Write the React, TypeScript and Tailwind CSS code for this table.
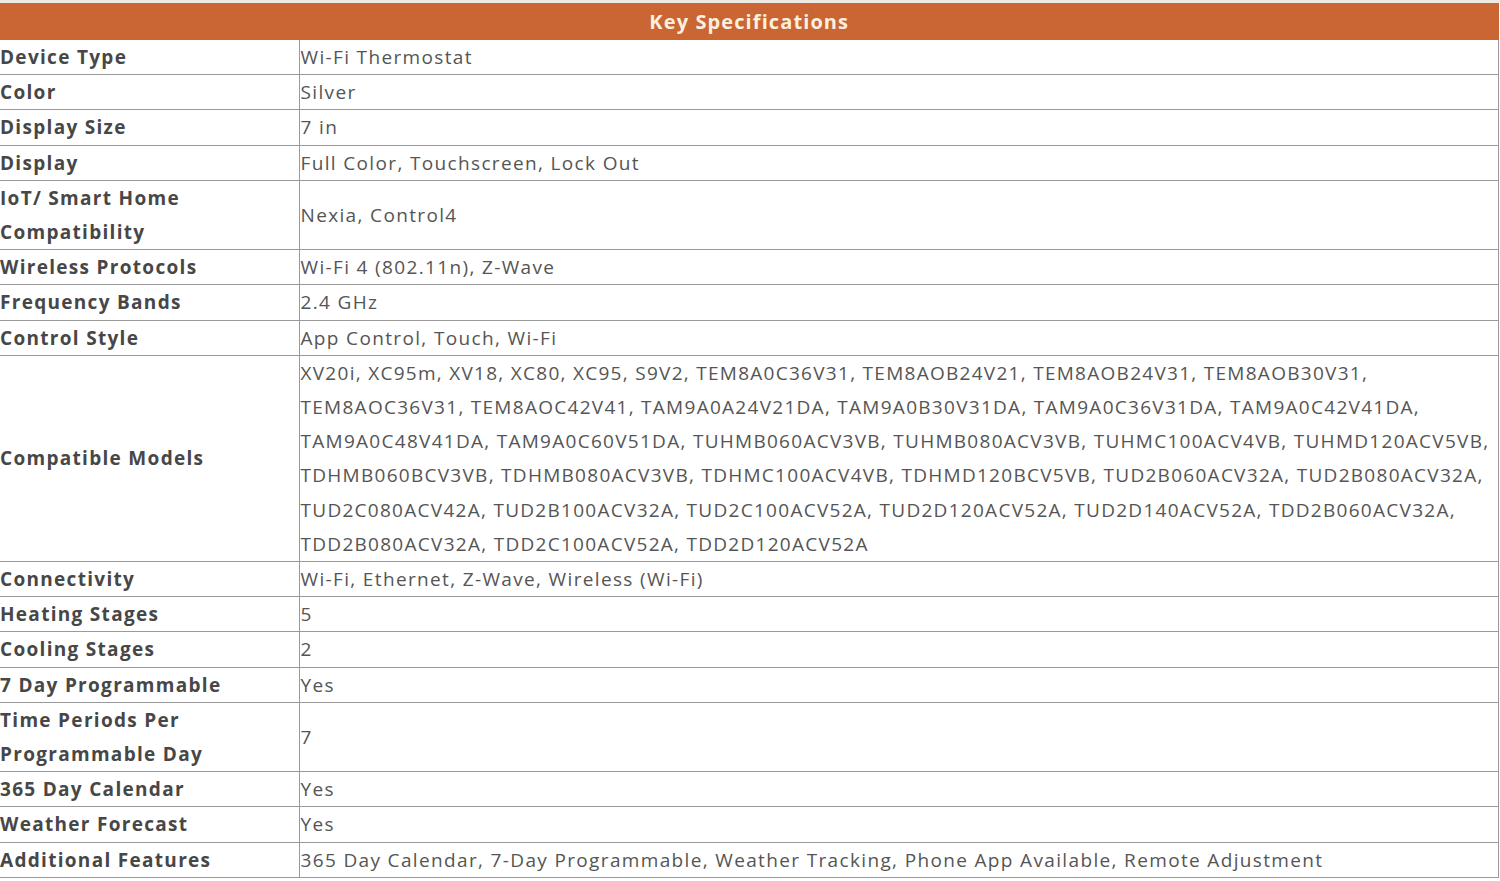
import React from 'react';

type Spec = { label: string[]; value: string[]; dense?: boolean };

const specs: Spec[] = [
  { label: ['Device Type'], value: ['Wi-Fi Thermostat'] },
  { label: ['Color'], value: ['Silver'] },
  { label: ['Display Size'], value: ['7 in'] },
  { label: ['Display'], value: ['Full Color, Touchscreen, Lock Out'] },
  { label: ['IoT/ Smart Home', 'Compatibility'], value: ['Nexia, Control4'] },
  { label: ['Wireless Protocols'], value: ['Wi-Fi 4 (802.11n), Z-Wave'] },
  { label: ['Frequency Bands'], value: ['2.4 GHz'] },
  { label: ['Control Style'], value: ['App Control, Touch, Wi-Fi'] },
  {
    label: ['Compatible Models'],
    dense: true,
    value: [
      'XV20i, XC95m, XV18, XC80, XC95, S9V2, TEM8A0C36V31, TEM8AOB24V21, TEM8AOB24V31, TEM8AOB30V31,',
      'TEM8AOC36V31, TEM8AOC42V41, TAM9A0A24V21DA, TAM9A0B30V31DA, TAM9A0C36V31DA, TAM9A0C42V41DA,',
      'TAM9A0C48V41DA, TAM9A0C60V51DA, TUHMB060ACV3VB, TUHMB080ACV3VB, TUHMC100ACV4VB, TUHMD120ACV5VB,',
      'TDHMB060BCV3VB, TDHMB080ACV3VB, TDHMC100ACV4VB, TDHMD120BCV5VB, TUD2B060ACV32A, TUD2B080ACV32A,',
      'TUD2C080ACV42A, TUD2B100ACV32A, TUD2C100ACV52A, TUD2D120ACV52A, TUD2D140ACV52A, TDD2B060ACV32A,',
      'TDD2B080ACV32A, TDD2C100ACV52A, TDD2D120ACV52A',
    ],
  },
  { label: ['Connectivity'], value: ['Wi-Fi, Ethernet, Z-Wave, Wireless (Wi-Fi)'] },
  { label: ['Heating Stages'], value: ['5'] },
  { label: ['Cooling Stages'], value: ['2'] },
  { label: ['7 Day Programmable'], value: ['Yes'] },
  { label: ['Time Periods Per', 'Programmable Day'], value: ['7'] },
  { label: ['365 Day Calendar'], value: ['Yes'] },
  { label: ['Weather Forecast'], value: ['Yes'] },
  {
    label: ['Additional Features'],
    value: ['365 Day Calendar, 7-Day Programmable, Weather Tracking, Phone App Available, Remote Adjustment'],
  },
];

export default function App() {
  return (
    <div className="min-h-[881px] w-[1500px] overflow-hidden bg-white font-['Open_Sans',sans-serif]">
      <div className="h-[3px] bg-[#efe9e4]" />
      <table className="w-[1499px] table-fixed border-collapse">
        <colgroup>
          <col className="w-[299px]" />
          <col />
        </colgroup>
        <thead>
          <tr>
            <th
              colSpan={2}
              className="h-[37px] bg-[#c96633] p-0 text-center text-[20px] font-bold tracking-[1.1px] text-[#fcefdf]"
            >
              Key Specifications
            </th>
          </tr>
        </thead>
        <tbody>
          {specs.map((s) => (
            <tr key={s.label.join(' ')} className="border-b border-[#9a9a9a]">
              <td className="border-r border-[#9a9a9a] p-0 align-middle text-[19px] font-bold leading-[34.2px] tracking-[1.3px] text-[#474747]">
                {s.label.map((l) => (
                  <div key={l} className="whitespace-nowrap">{l}</div>
                ))}
              </td>
              <td
                className={`border-r border-[#9a9a9a] p-0 pl-px align-middle text-[19px] leading-[34.2px] text-[#555555] ${
                  s.dense ? 'tracking-[1.28px]' : 'tracking-[1.35px]'
                }`}
              >
                {s.value.map((v) => (
                  <div key={v} className="whitespace-nowrap">{v}</div>
                ))}
              </td>
            </tr>
          ))}
        </tbody>
      </table>
    </div>
  );
}
